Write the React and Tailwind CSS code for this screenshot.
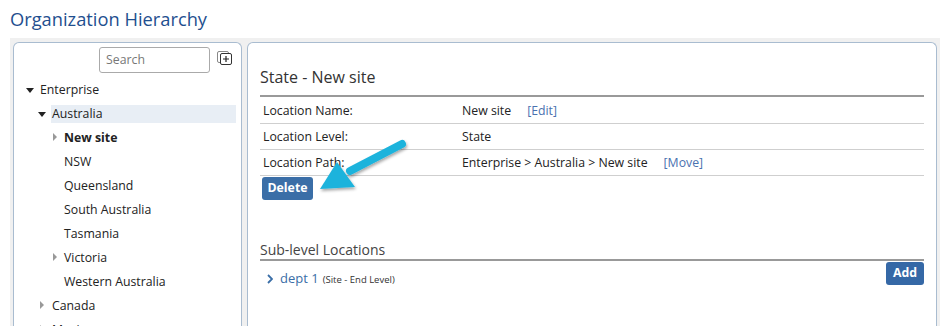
import React from "react";

const DownTri = () => (
  <svg width="8" height="5" viewBox="0 0 8 5" className="block">
    <path d="M0 0 L8 0 L4 5 Z" fill="#222" />
  </svg>
);
const RightTri = () => (
  <svg width="4" height="8" viewBox="0 0 4 8" className="block">
    <path d="M0 0 L4 4 L0 8 Z" fill="#999" />
  </svg>
);

function TreeRow({ level, icon, label, bold, selected }) {
  const pl = level === 0 ? "pl-[12px]" : level === 1 ? "pl-[24px]" : "pl-[37px]";
  return (
    <div className={`h-[24px] flex items-center ${pl} pr-[5px]`}>
      <div className="w-[13px] flex items-center">
        {icon === "down" && <DownTri />}
        {icon === "right" && (
          <div className={level === 2 ? "pl-[2px] -mt-[3px]" : "pl-[2px] -mt-[2px]"}>
            <RightTri />
          </div>
        )}
      </div>
      <div
        className={`flex-1 h-[18px] flex items-center ${level === 2 ? "" : "pl-[1px]"} ${
          selected ? "bg-[#e8eef5]" : ""
        } ${bold ? "font-bold" : ""}`}
      >
        {label}
      </div>
    </div>
  );
}

function InfoRow({ label, value, link }) {
  return (
    <div className="h-[26px] border-b border-[#cfcfcf] flex items-center pt-[2px]">
      <div className="w-[202px] pl-[3px]">{label}</div>
      <div className="flex items-center">
        <span>{value}</span>
        {link && <span className="ml-[16px] text-[#4a72b0]">{link}</span>}
      </div>
    </div>
  );
}

export default function App() {
  return (
    <div
      className="w-[950px] h-[326px] overflow-hidden bg-white flex flex-col text-[12.3px] text-[#222]"
      style={{ fontFamily: '"Open Sans", "Noto Sans", sans-serif' }}
    >
      <div className="h-[38px] pl-[10px] pt-[5px] text-[18.3px] leading-[28px] text-[#1f4f8f]">
        Organization Hierarchy
      </div>
      <div className="flex-1 mx-[10px] bg-[#f0f0f0] flex gap-[5px] pl-[3px] pr-[3px] pt-[4px] min-h-0">
        {/* Left panel */}
        <div className="w-[229px] bg-white border border-b-0 border-[#a9bcd0] rounded-t-[6px] overflow-hidden">
          <div className="flex items-start pl-[85px] pt-[4px]">
            <div className="w-[111px] h-[26px] border border-[#aaa] rounded-[3px] flex items-center pl-[6px] text-[#777]">
              Search
            </div>
            <div className="ml-[7px] mt-[4px]">
              <svg width="15" height="14" viewBox="0 0 15 14" className="block">
                <rect x="0.5" y="0.5" width="11" height="11" rx="1.5" fill="#fff" stroke="#888" />
                <rect x="3.5" y="2.5" width="11" height="11" rx="1.5" fill="#fff" stroke="#333" />
                <path d="M6 8 H12 M9 5 V11" stroke="#222" strokeWidth="1.2" />
              </svg>
            </div>
          </div>
          <div className="mt-[5px]">
            <TreeRow level={0} icon="down" label="Enterprise" />
            <TreeRow level={1} icon="down" label="Australia" selected />
            <TreeRow level={2} icon="right" label="New site" bold />
            <TreeRow level={2} label="NSW" />
            <TreeRow level={2} label="Queensland" />
            <TreeRow level={2} label="South Australia" />
            <TreeRow level={2} label="Tasmania" />
            <TreeRow level={2} icon="right" label="Victoria" />
            <TreeRow level={2} label="Western Australia" />
            <TreeRow level={1} icon="right" label="Canada" />
            <TreeRow level={1} icon="right" label="Mexico" />
          </div>
        </div>
        {/* Right panel */}
        <div className="relative flex-1 bg-white border border-b-0 border-[#a9bcd0] rounded-t-[6px] px-[12px]">
          <div className="pt-[23px] h-[52px] text-[16px] leading-[22px] text-[#333]">State - New site</div>
          <div className="h-[2px] bg-[#999] mb-[1px]" />
          <InfoRow label="Location Name:" value="New site" link="[Edit]" />
          <InfoRow label="Location Level:" value="State" />
          <InfoRow label="Location Path:" value="Enterprise > Australia > New site" link="[Move]" />
          <div className="pt-[1px] pl-[2px]">
            <div className="w-[51px] h-[23px] rounded-[3px] bg-[#3a6ea7] text-white font-bold flex items-center justify-center">
              Delete
            </div>
          </div>
          <div className="mt-[40px] text-[14px] leading-[19px] text-[#444]">Sub-level Locations</div>
          <div className="h-[2px] bg-[#999]" />
          <div className="flex items-start justify-between pt-[1px]">
            <div className="flex items-baseline pl-[7px] pt-[7px]">
              <svg width="6" height="10" viewBox="0 0 6 10" className="self-center mr-[7px]">
                <path d="M1 1 L5 5 L1 9" fill="none" stroke="#3a6ea7" strokeWidth="1.8" />
              </svg>
              <span className="text-[#3a6ea7] text-[13px]">dept 1</span>
              <span className="ml-[4px] text-[9.5px] text-[#333]">(Site - End Level)</span>
            </div>
            <div className="w-[38px] h-[23px] rounded-[3px] bg-[#3568a6] text-white font-bold flex items-center justify-center">
              Add
            </div>
          </div>
          {/* Annotation arrow */}
          <svg
            className="absolute left-[60px] top-[90px] pointer-events-none"
            width="110"
            height="70"
            viewBox="0 0 110 70"
          >
            <defs>
              <filter id="sh" x="-20%" y="-20%" width="140%" height="140%">
                <feDropShadow dx="1" dy="2" stdDeviation="1.5" floodColor="#000" floodOpacity="0.35" />
              </filter>
            </defs>
            <g filter="url(#sh)">
              <path d="M94 11 L42 38" stroke="#1fb3dc" strokeWidth="8" strokeLinecap="round" />
              <path d="M12 56 L29 29 L47 54 Z" fill="#1fb3dc" />
            </g>
          </svg>
        </div>
      </div>
    </div>
  );
}
